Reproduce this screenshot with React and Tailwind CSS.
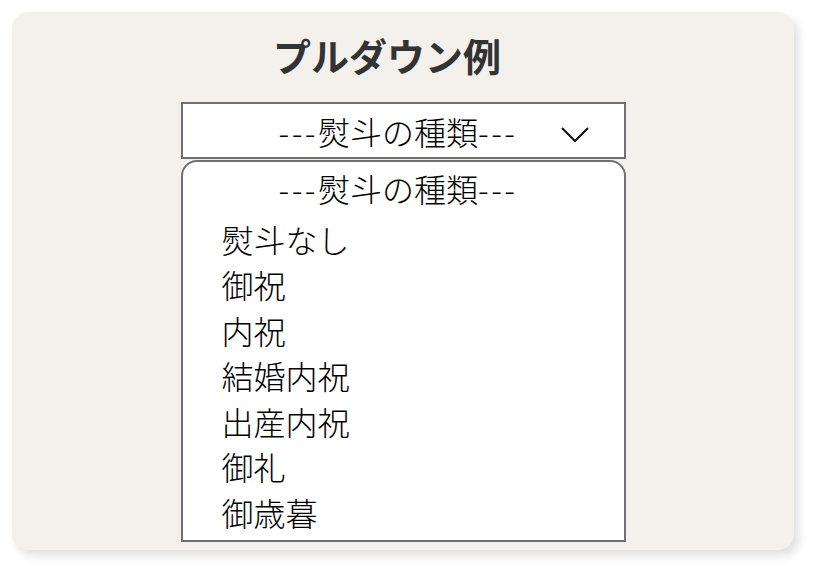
import React from 'react';

const options = ['熨斗なし', '御祝', '内祝', '結婚内祝', '出産内祝', '御礼', '御歳暮'];

function Placeholder() {
  return (
    <>
      <span className="tracking-[2.5px]">---</span>熨斗の種類<span className="tracking-[2.5px]">---</span>
    </>
  );
}

export default function App() {
  return (
    <div className="w-[818px] h-[574px] bg-white pt-3 pl-3" style={{ fontFamily: '"Noto Sans CJK JP", "Noto Sans", sans-serif' }}>
      <div className="w-[782px] h-[538px] rounded-[16px] bg-[#f4f1ec] shadow-[5px_6px_10px_rgba(0,0,0,0.12)] flex flex-col items-center">
        <h1 className="mt-[20px] h-[46px] leading-[46px] text-[38px] font-bold text-[#333333] pr-[32px]">プルダウン例</h1>
        <div className="mt-[24px] w-[445px] flex flex-col">
          <div className="h-[57px] border-2 border-[#707070] bg-white flex items-center relative">
            <span className="flex-1 text-center text-[32px] font-light text-black leading-none pr-[10px]">
              <Placeholder />
            </span>
            <svg className="absolute left-[377px] top-[22px]" width="30" height="18" viewBox="0 0 30 18">
              <polyline points="2,2 15,15 28,2" fill="none" stroke="#111" strokeWidth="2" />
            </svg>
          </div>
          <div className="mt-px h-[382px] border-2 border-[#707070] rounded-t-[16px] bg-white flex flex-col">
            <div className="h-[54px] pb-[2px] pr-[10px] flex items-center justify-center text-[32px] font-light text-black">
              <Placeholder />
            </div>
            {options.map((o) => (
              <div key={o} className="h-[45.5px] flex items-center pl-[39px] text-[32px] font-light text-black">
                {o}
              </div>
            ))}
          </div>
        </div>
      </div>
    </div>
  );
}
